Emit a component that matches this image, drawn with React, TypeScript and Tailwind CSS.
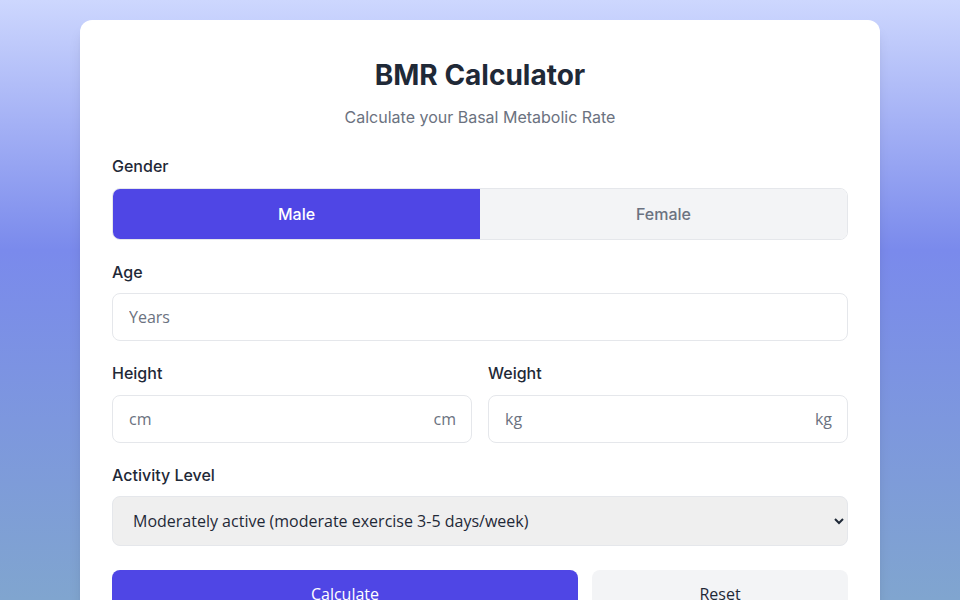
import React, { useState } from 'react';

const inter = { fontFamily: 'Inter, "Noto Sans", sans-serif' };

function Label({ children, gap = 'mb-2' }: { children: React.ReactNode; gap?: string }) {
  return <label className={`${gap} block text-base font-medium leading-6 text-[#1f2937]`}>{children}</label>;
}

function UnitInput({ placeholder, unit }: { placeholder: string; unit: string }) {
  return (
    <div className="relative">
      <input
        type="text"
        placeholder={placeholder}
        className="h-[48px] w-full rounded-lg border border-[#e5e7eb] bg-white pl-4 pr-12 text-base text-[#1f2937] outline-none placeholder:text-[#6b7280] font-['Open_Sans',sans-serif]"
      />
      <span className="pointer-events-none absolute right-4 top-1/2 -translate-y-1/2 text-base text-[#6b7280] font-['Open_Sans',sans-serif]">
        {unit}
      </span>
    </div>
  );
}

export default function App() {
  const [gender, setGender] = useState<'male' | 'female'>('male');

  return (
    <div
      className="min-h-screen bg-[linear-gradient(180deg,#cdd7fe_0px,#7a8aec_250px,#80a5cf_600px)] px-4 pt-5 pb-10"
      style={inter}
    >
      <div className="mx-auto w-full max-w-[800px] rounded-xl bg-white px-8 pt-[34px] pb-8 shadow-lg">
        <h1 className="text-center text-[28px] font-bold leading-[42px] text-[#1f2937]">BMR Calculator</h1>
        <p className="mt-[9px] mb-[25px] text-center text-base leading-6 text-[#6b7280]">Calculate your Basal Metabolic Rate</p>

        <div className="mb-5">
          <Label gap="mb-[10px]">Gender</Label>
          <div className="flex overflow-hidden rounded-lg border border-[#e5e7eb]">
            <button
              onClick={() => setGender('male')}
              className={`h-[50px] flex-1 text-base font-medium ${gender === 'male' ? 'bg-[#4f46e5] text-white' : 'bg-[#f3f4f6] text-[#6b7280]'}`}
            >
              Male
            </button>
            <button
              onClick={() => setGender('female')}
              className={`h-[50px] flex-1 text-base font-medium ${gender === 'female' ? 'bg-[#4f46e5] text-white' : 'bg-[#f3f4f6] text-[#6b7280]'}`}
            >
              Female
            </button>
          </div>
        </div>

        <div className="mb-5">
          <Label gap="mb-[9px]">Age</Label>
          <input
            type="text"
            placeholder="Years"
            className="h-[48px] w-full rounded-lg border border-[#e5e7eb] bg-white px-4 text-base text-[#1f2937] outline-none placeholder:text-[#6b7280] font-['Open_Sans',sans-serif]"
          />
        </div>

        <div className="mb-[20px] grid grid-cols-2 gap-4">
          <div>
            <Label gap="mb-[10px]">Height</Label>
            <UnitInput placeholder="cm" unit="cm" />
          </div>
          <div>
            <Label gap="mb-[10px]">Weight</Label>
            <UnitInput placeholder="kg" unit="kg" />
          </div>
        </div>

        <div className="mb-6">
          <Label gap="mb-[9px]">Activity Level</Label>
          <select
            defaultValue="moderate"
            className="h-[50px] w-full rounded-lg border border-[#e5e7eb] bg-[#efefef] px-4 text-base text-[#1f2937] outline-none font-['Open_Sans',sans-serif]"
          >
            <option value="sedentary">Sedentary (little or no exercise)</option>
            <option value="light">Lightly active (light exercise 1-3 days/week)</option>
            <option value="moderate">Moderately active (moderate exercise 3-5 days/week)</option>
            <option value="very">Very active (hard exercise 6-7 days/week)</option>
            <option value="extra">Extra active (very hard exercise &amp; physical job)</option>
          </select>
        </div>

        <div className="flex gap-[14px]">
          <button className="h-12 flex-1 rounded-lg bg-[#4f46e5] text-base text-white font-['Open_Sans',sans-serif]">
            Calculate
          </button>
          <button className="h-12 w-64 rounded-lg bg-[#f3f4f6] text-base text-[#1f2937] font-['Open_Sans',sans-serif]">
            Reset
          </button>
        </div>
      </div>
    </div>
  );
}
